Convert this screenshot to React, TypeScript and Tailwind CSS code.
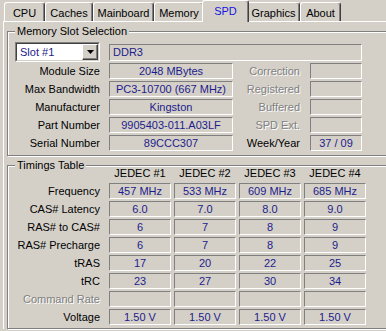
import React from "react";

const tabs = [
  { name: "CPU", w: "w-[41px]" },
  { name: "Caches", w: "w-[48px]" },
  { name: "Mainboard", w: "w-[61px]" },
  { name: "Memory", w: "w-[50px]" },
  { name: "SPD", w: "w-[47px]", active: true },
  { name: "Graphics", w: "w-[53px]" },
  { name: "About", w: "w-[41px]" },
];

const slotRows = [
  { label: "Module Size", value: "2048 MBytes", side: "Correction", sideOn: false, sideValue: "" },
  { label: "Max Bandwidth", value: "PC3-10700 (667 MHz)", side: "Registered", sideOn: false, sideValue: "" },
  { label: "Manufacturer", value: "Kingston", side: "Buffered", sideOn: false, sideValue: "" },
  { label: "Part Number", value: "9905403-011.A03LF", side: "SPD Ext.", sideOn: false, sideValue: "" },
  { label: "Serial Number", value: "89CCC307", side: "Week/Year", sideOn: true, sideValue: "37 / 09" },
];

const timings = [
  { label: "Frequency", values: ["457 MHz", "533 MHz", "609 MHz", "685 MHz"] },
  { label: "CAS# Latency", values: ["6.0", "7.0", "8.0", "9.0"] },
  { label: "RAS# to CAS#", values: ["6", "7", "8", "9"] },
  { label: "RAS# Precharge", values: ["6", "7", "8", "9"] },
  { label: "tRAS", values: ["17", "20", "22", "25"] },
  { label: "tRC", values: ["23", "27", "30", "34"] },
  { label: "Command Rate", values: ["", "", "", ""], off: true },
  { label: "Voltage", values: ["1.50 V", "1.50 V", "1.50 V", "1.50 V"] },
];

const field =
  "h-[16px] flex items-center justify-center border border-t-[#808080] border-l-[#808080] border-b-white border-r-white text-[#1c1c8c] whitespace-nowrap";

const offText = "text-[#808080] [text-shadow:1px_1px_0_#fff]";

function Group({ title, className, children }: { title: string; className: string; children: React.ReactNode }) {
  return (
    <div className={"relative w-[400px] border border-[#808080] shadow-[inset_1px_1px_0_#fff,1px_1px_0_#fff] pl-[7px] " + className}>
      <span className="absolute -top-[7px] left-[7px] bg-[#d4d0c8] px-[2px] leading-[13px]">{title}</span>
      {children}
    </div>
  );
}

export default function App() {
  return (
    <div className="relative w-[386px] h-[331px] overflow-hidden bg-[#d4d0c8] text-[11px] leading-none text-black font-['Liberation_Sans',Arial,sans-serif]">
      {/* tab strip */}
      <div className="flex items-end h-[21px] pl-[4px]">
        {tabs.map((t) =>
          t.active ? (
            <div
              key={t.name}
              className={"relative z-10 -mx-[2px] -mb-[1px] h-[22px] flex items-start pt-[5px] justify-center bg-[#d4d0c8] border-l border-t border-white border-r border-r-[#404040] shadow-[inset_-1px_0_0_#808080] rounded-t-[3px] text-[#1515e0] " + t.w}
            >
              {t.name}
            </div>
          ) : (
            <div
              key={t.name}
              className={"h-[19px] flex items-start pt-[5px] justify-center border-l border-t border-white border-r border-r-[#404040] shadow-[inset_-1px_0_0_#808080] rounded-t-[3px] " + t.w}
            >
              {t.name}
            </div>
          )
        )}
      </div>

      {/* panel */}
      <div className="ml-[3px] border-l border-t border-white pl-[3px] pt-[9px]">
        <Group title="Memory Slot Selection" className="pt-[10px] pb-[4px]">
          <div className="flex items-center h-[20px]">
            <div className="w-[85px] h-[20px] flex border border-[#808080] border-b-white border-r-white">
              <div className="flex-1 flex bg-white border border-[#404040] border-b-[#d4d0c8] border-r-[#d4d0c8]">
                <span className="flex-1 flex items-center pl-[3px] text-[#1c1c8c]">Slot #1</span>
                <span className="w-[16px] flex items-center justify-center bg-[#d4d0c8] border border-white border-b-[#404040] border-r-[#404040] shadow-[inset_-1px_-1px_0_#808080]">
                  <svg width="7" height="4" viewBox="0 0 7 4">
                    <path d="M0 0h7L3.5 4z" fill="#000" />
                  </svg>
                </span>
              </div>
            </div>
            <div className={field + " ml-[9px] w-[253px] h-[17px] justify-start pl-[3px]"}>DDR3</div>
          </div>
          <div className="mt-[1px] flex flex-col gap-[2px]">
            {slotRows.map((r) => (
              <div key={r.label} className="flex items-center h-[16px]">
                <span className="w-[85px] text-right">{r.label}</span>
                <div className={field + " ml-[9px] w-[124px]"}>{r.value}</div>
                <span className={"w-[67px] text-right " + (r.sideOn ? "" : offText)}>{r.side}</span>
                <div className={field + " ml-[10px] w-[52px]"}>{r.sideValue}</div>
              </div>
            ))}
          </div>
        </Group>

        <Group title="Timings Table" className="mt-[9px] pb-[3px]">
          <div className="flex flex-col gap-[2px]">
            <div className="flex items-center h-[15px]">
              <span className="w-[94px]" />
              <div className="flex gap-[3px]">
                {["JEDEC #1", "JEDEC #2", "JEDEC #3", "JEDEC #4"].map((h) => (
                  <span key={h} className="w-[62px] text-center">{h}</span>
                ))}
              </div>
            </div>
            {timings.map((r) => (
              <div key={r.label} className="flex items-center h-[16px]">
                <span className={"w-[85px] text-right " + (r.off ? offText : "")}>{r.label}</span>
                <div className="ml-[9px] flex gap-[3px]">
                  {r.values.map((v, i) => (
                    <div key={i} className={field + " w-[62px]"}>{v}</div>
                  ))}
                </div>
              </div>
            ))}
          </div>
        </Group>
      </div>
    </div>
  );
}
